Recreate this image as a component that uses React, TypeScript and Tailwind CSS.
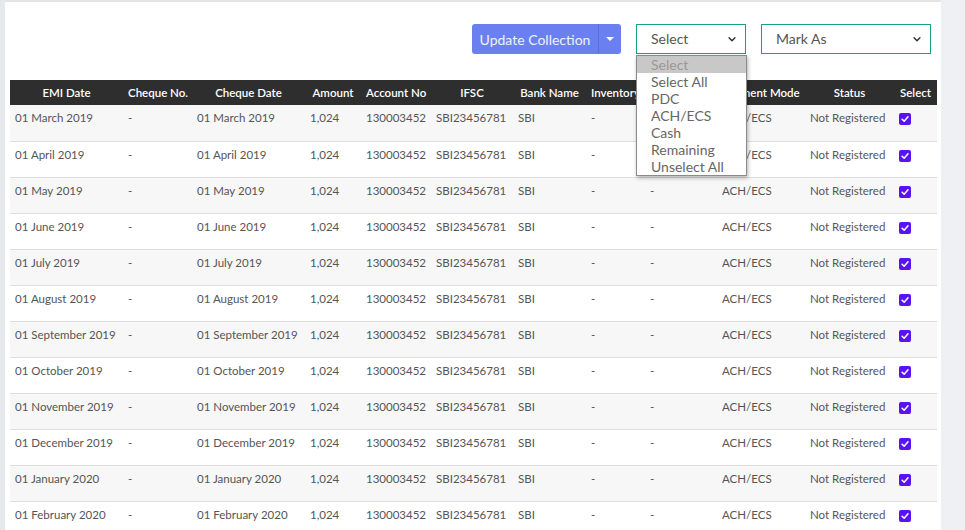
import React from 'react';

const columns = [
  { label: 'EMI Date', w: 'w-[113px]' },
  { label: 'Cheque No.', w: 'w-[69px]' },
  { label: 'Cheque Date', w: 'w-[113px]' },
  { label: 'Amount', w: 'w-[56px]' },
  { label: 'Account No', w: 'w-[70px]' },
  { label: 'IFSC', w: 'w-[82px]' },
  { label: 'Bank Name', w: 'w-[73px]' },
  { label: 'Inventory', w: 'w-[59px]' },
  { label: 'Cheque Type', w: 'w-[72px]' },
  { label: 'Payment Mode', w: 'w-[88px]' },
  { label: 'Status', w: 'w-[89px]' },
  { label: 'Select', w: 'w-[43px]' },
];

const months = [
  '01 March 2019',
  '01 April 2019',
  '01 May 2019',
  '01 June 2019',
  '01 July 2019',
  '01 August 2019',
  '01 September 2019',
  '01 October 2019',
  '01 November 2019',
  '01 December 2019',
  '01 January 2020',
  '01 February 2020',
];

const options = ['Select All', 'PDC', 'ACH/ECS', 'Cash', 'Remaining', 'Unselect All'];

function Checked() {
  return (
    <span className="inline-flex h-[12px] w-[12px] items-center justify-center rounded-[2px] bg-[#5a12f5]">
      <svg viewBox="0 0 12 12" className="h-[10px] w-[10px]">
        <path d="M2.5 6.3 L5 8.6 L9.6 3.4" fill="none" stroke="white" strokeWidth="1.8" strokeLinecap="round" strokeLinejoin="round" />
      </svg>
    </span>
  );
}

function Chevron() {
  return (
    <svg viewBox="0 0 12 12" className="h-[10px] w-[10px]">
      <path d="M2.5 4.5 L6 8 L9.5 4.5" fill="none" stroke="#333" strokeWidth="1.8" strokeLinecap="round" strokeLinejoin="round" />
    </svg>
  );
}

export default function App() {
  return (
    <div className="flex h-[530px] w-[965px] overflow-hidden bg-[#eef0f4] font-['Lato',sans-serif]">
      <div className="w-[5px] shrink-0 bg-[#e6e8eb]" />
      <div className="w-[936px] shrink-0 border-t-2 border-[#e4e4e4] bg-white">
        {/* Toolbar */}
        <div className="flex h-[78px] items-start justify-end gap-[15px] pr-[10px] pt-[22px]">
          <div className="flex h-[30px] overflow-hidden rounded-[3px] bg-[#6b80f0] text-[14px] text-[#eef1ff]">
            <button className="w-[126px] text-center">Update Collection</button>
            <button className="flex w-[23px] items-center justify-center border-l border-[#5a6ee0]">
              <span className="h-0 w-0 border-x-[4px] border-t-[4px] border-x-transparent border-t-white" />
            </button>
          </div>
          <div className="relative">
            <div className="flex h-[30px] w-[110px] items-center justify-between border border-[#18a083] pb-[1px] pl-[14px] pr-[8px] text-[14px] text-[#555]">
              <span>Select</span>
              <Chevron />
            </div>
            <div className="absolute left-0 top-[31px] z-10 w-[111px] border border-[#8a8a8a] bg-white text-[14px] leading-[17px] text-[#666] shadow-[1px_2px_4px_rgba(0,0,0,0.3)]">
              <div className="bg-[#c8c8c8] pl-[14px] text-[#999]">Select</div>
              {options.map((o) => (
                <div key={o} className="pl-[14px]">
                  {o}
                </div>
              ))}
            </div>
          </div>
          <div className="flex h-[30px] w-[170px] items-center justify-between border border-[#18a083] pb-[1px] pl-[14px] pr-[8px] text-[14px] text-[#555]">
            <span>Mark As</span>
            <Chevron />
          </div>
        </div>

        {/* Table */}
        <div className="px-[5px]">
          <table className="w-[927px] table-fixed border-collapse text-[11.5px]">
            <thead>
              <tr className="h-[25px] bg-[#2e2e2e] text-white">
                {columns.map((c) => (
                  <th key={c.label} className={`${c.w} whitespace-nowrap px-[5px] text-center font-semibold`}>
                    {c.label}
                  </th>
                ))}
              </tr>
            </thead>
            <tbody className="text-[#555]">
              {months.map((m, i) => (
                <tr key={m} className={`h-[36px] border-b border-[#dedede] ${i % 2 === 0 ? 'bg-[#f7f7f7]' : 'bg-white'}`}>
                  <td className="whitespace-nowrap px-[5px] pt-[4px] align-top">{m}</td>
                  <td className="px-[5px] pt-[4px] align-top">-</td>
                  <td className="whitespace-nowrap px-[5px] pt-[4px] align-top">{m}</td>
                  <td className="px-[5px] pt-[4px] align-top">1,024</td>
                  <td className="px-[5px] pt-[4px] align-top">130003452</td>
                  <td className="px-[5px] pt-[4px] align-top">SBI23456781</td>
                  <td className="px-[5px] pt-[4px] align-top">SBI</td>
                  <td className="px-[5px] pt-[4px] align-top">-</td>
                  <td className="px-[5px] pt-[4px] align-top">-</td>
                  <td className="px-[5px] pt-[4px] align-top">ACH/ECS</td>
                  <td className="whitespace-nowrap px-[5px] pt-[4px] align-top">Not Registered</td>
                  <td className="px-[5px] pt-[6px] align-top">
                    <Checked />
                  </td>
                </tr>
              ))}
            </tbody>
          </table>
        </div>
      </div>
    </div>
  );
}
